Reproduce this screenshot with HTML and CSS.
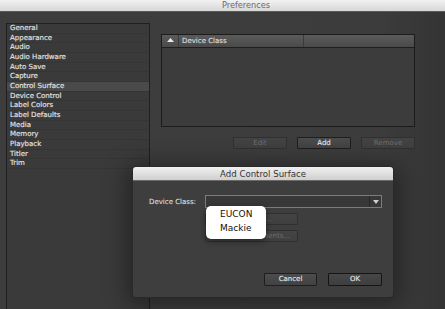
FILE: index.html
```html
<!DOCTYPE html>
<html>
<head>
<meta charset="utf-8">
<link rel="stylesheet" href="styles.css">
</head>
<body>
<div class="window">
  <div class="titlebar">Preferences</div>
  <div class="content">
    <ul class="sidebar">
      <li>General</li>
      <li>Appearance</li>
      <li>Audio</li>
      <li>Audio Hardware</li>
      <li>Auto Save</li>
      <li>Capture</li>
      <li class="selected">Control Surface</li>
      <li>Device Control</li>
      <li>Label Colors</li>
      <li>Label Defaults</li>
      <li>Media</li>
      <li>Memory</li>
      <li>Playback</li>
      <li>Titler</li>
      <li>Trim</li>
    </ul>
    <div class="panel">
      <div class="table">
        <div class="thead">
          <span class="sort-cell"><svg width="7" height="4" viewBox="0 0 7 4"><polygon points="0,4 3.5,0 7,4" fill="#e8e8e8"/></svg></span>
          <span class="col-main">Device Class</span>
          <span class="col-rest"></span>
        </div>
        <div class="tbody"></div>
      </div>
      <div class="actions">
        <button class="btn disabled">Edit</button>
        <button class="btn">Add</button>
        <button class="btn disabled">Remove</button>
      </div>
    </div>
  </div>

  <div class="dialog">
    <div class="dialog-title">Add Control Surface</div>
    <div class="dialog-body">
      <div class="field-row">
        <span class="field-label">Device Class:</span>
        <div class="select">
          <span class="select-value"></span>
          <span class="select-arrow"><svg width="6" height="4" viewBox="0 0 6 4"><polygon points="0,0 6,0 3,4" fill="#d0d0d0"/></svg></span>
        </div>
      </div>
      <div class="field-row">
        <span class="field-label"></span>
        <button class="btn disabled wide">Configure...</button>
      </div>
      <div class="field-row">
        <span class="field-label"></span>
        <button class="btn disabled wide">Button Assignments...</button>
      </div>
      <div class="dialog-actions">
        <button class="btn">Cancel</button>
        <button class="btn default">OK</button>
      </div>
    </div>
  </div>

  <div class="popup">
    <div class="popup-item">EUCON</div>
    <div class="popup-item">Mackie</div>
  </div>
</div>
</body>
</html>
```

FILE: styles.css
```css
* { box-sizing: border-box; }

html, body {
  margin: 0;
  padding: 0;
  width: 445px;
  height: 309px;
  overflow: hidden;
  background: #3c3c3c;
  font-family: "DejaVu Sans", "Liberation Sans", sans-serif;
}

.window {
  position: relative;
  width: 445px;
  height: 309px;
  background: linear-gradient(to right, #3d3d3d 0%, #3c3c3c 85%, #343434 100%);
  overflow: hidden;
}

.titlebar {
  height: 12px;
  background: linear-gradient(#f2f2f2, #d6d6d6);
  border-bottom: 1px solid #5a5a5a;
  color: #6c6c6c;
  font-size: 8.2px;
  line-height: 11px;
  text-align: center;
  padding-left: 47px;
}

.content {
  display: flex;
  align-items: flex-start;
  padding: 11px 0 0 6px;
}

.sidebar {
  list-style: none;
  margin: 0;
  padding: 0;
  width: 144px;
  height: 300px;
  border: 1px solid #202020;
  background: #3a3a3a;
}

.sidebar li {
  height: 9.67px;
  line-height: 9px;
  padding-left: 3px;
  font-size: 7px;
  color: #e4e4e4;
  border-bottom: 1px solid #353535;
  white-space: nowrap;
  -webkit-text-stroke: 0.15px #e4e4e4;
}

.sidebar li.selected {
  background: #4a4a4a;
}

.panel {
  margin: 11px 0 0 11px;
  width: 254px;
  display: flex;
  flex-direction: column;
}

.table {
  height: 93px;
  border: 1px solid #1c1c1c;
  background: #3c3c3c;
  display: flex;
  flex-direction: column;
}

.thead {
  display: flex;
  height: 13px;
  background: linear-gradient(#5b5b5b, #4a4a4a);
  border-bottom: 1px solid #1f1f1f;
  color: #dcdcdc;
  font-size: 7px;
  line-height: 12px;
}

.sort-cell {
  width: 17px;
  display: flex;
  align-items: center;
  justify-content: center;
  padding-bottom: 2px;
  border-right: 1px solid #3a3a3a;
}

.col-main {
  width: 125px;
  padding-left: 3px;
  border-right: 1px solid #3a3a3a;
  -webkit-text-stroke: 0.15px #dcdcdc;
}

.col-rest { flex: 1; }

.tbody { flex: 1; }

.actions {
  display: flex;
  justify-content: flex-end;
  gap: 10px;
  margin-top: 10px;
}

.btn {
  width: 54px;
  height: 12px;
  padding: 0;
  margin: 0;
  font-family: "DejaVu Sans", sans-serif;
  font-size: 7px;
  line-height: 10px;
  color: #e2e2e2;
  background: linear-gradient(#4c4c4c, #424242);
  border: 1px solid #1e1e1e;
  border-radius: 1px;
  -webkit-text-stroke: 0.15px #e2e2e2;
}

.btn.disabled {
  color: #6e6e6e;
  border-color: #303030;
  background: linear-gradient(#444444, #3f3f3f);
  -webkit-text-stroke: 0;
}

.dialog {
  position: absolute;
  left: 133px;
  top: 167px;
  width: 260px;
  height: 130px;
  background: #3e3e3e;
  border-radius: 3px;
  overflow: hidden;
  box-shadow: 0 0 0 1px #2a2a2a, 0 3px 22px 6px rgba(0, 0, 0, 0.38);
  display: flex;
  flex-direction: column;
}

.dialog-title {
  height: 14px;
  background: linear-gradient(#f0f0f0, #cfcfcf);
  border-bottom: 1px solid #6a6a6a;
  color: #333;
  font-size: 8.6px;
  line-height: 14px;
  text-align: center;
}

.dialog-body {
  flex: 1;
  display: flex;
  flex-direction: column;
  gap: 5px;
  padding: 14px 11px 11px 16px;
}

.field-row {
  display: flex;
  align-items: center;
}

.field-label {
  width: 56px;
  font-size: 7px;
  color: #d8d8d8;
  -webkit-text-stroke: 0.15px #d8d8d8;
}

.select {
  width: 177px;
  height: 13px;
  border: 1px solid #a97b0e;
  background: #383838;
  display: flex;
}

.select-value { flex: 1; }

.select-arrow {
  width: 12px;
  border-left: 1px solid #262626;
  display: flex;
  align-items: center;
  justify-content: center;
}

.btn.wide {
  width: 93px;
}

.field-row:nth-child(3) {
  margin-top: 0;
}

.dialog-actions {
  margin-top: auto;
  display: flex;
  justify-content: flex-end;
  gap: 11px;
}

.dialog-actions .btn {
  height: 13px;
  width: 53px;
  line-height: 11px;
}

.dialog-actions .btn.default {
  width: 54px;
  border-color: #151515;
  background: linear-gradient(#474747, #3e3e3e);
}

.popup {
  position: absolute;
  left: 206px;
  top: 206px;
  width: 60px;
  height: 33px;
  background: #ffffff;
  border-radius: 5px;
  box-shadow: 0 2px 6px rgba(0, 0, 0, 0.45);
  padding: 1px 0 0 14px;
}

.popup-item {
  height: 14px;
  line-height: 14px;
  font-size: 9px;
  color: #111;
}
```
